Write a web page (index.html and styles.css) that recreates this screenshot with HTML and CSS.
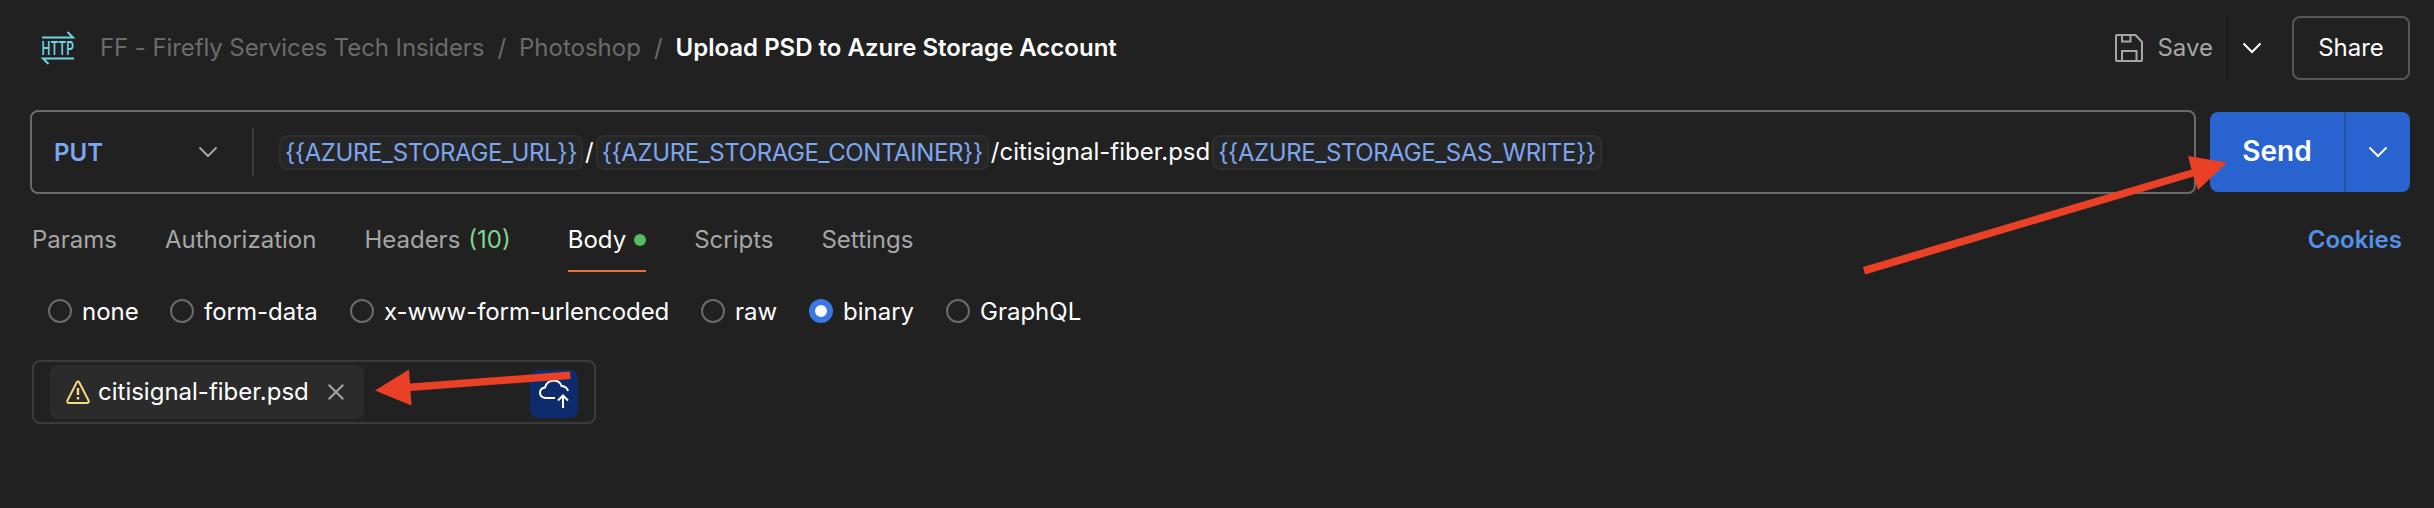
FILE: index.html
```html
<!DOCTYPE html>
<html lang="en">
<head>
<meta charset="utf-8">
<title>Upload PSD to Azure Storage Account</title>
<link rel="stylesheet" href="styles.css">
</head>
<body>
<header class="topbar">
  <svg class="http-icon" width="34" height="36" viewBox="0 0 34 36" role="img" aria-label="HTTP">
    <g fill="none" stroke="#6fd3e3" stroke-width="2">
      <path d="M1 7.500H32L26.500 2"/><path d="M33 28.500H2L7.500 34"/>
    </g>
    <text x="0.5" y="24.700" textLength="32.500" lengthAdjust="spacingAndGlyphs">HTTP</text>
  </svg>
  <nav class="crumbs">
    <span class="crumb collection">FF - Firefly Services Tech Insiders</span>
    <span class="sep">/</span>
    <span class="crumb">Photoshop</span>
    <span class="sep">/</span>
    <span class="title">Upload PSD to Azure Storage Account</span>
  </nav>
  <div class="actions">
    <button class="save">
      <svg width="28" height="28" viewBox="0 0 28 28" fill="none" stroke="#a6a6a6" stroke-width="2"><path d="M2 1H20.500L27 8V26Q27 27 26 27H2Q1 27 1 26V2Q1 1 2 1Z"/><path d="M7 1V7.500H15.500V1M7 27V17H21.500V27"/></svg>
      <span>Save</span>
    </button>
    <button class="save-more"><svg width="20" height="12" viewBox="0 0 20 12" fill="none" stroke="#fff" stroke-width="2"><path d="M1.500 1.500L10 10L18.500 1.500"/></svg></button>
    <button class="share">Share</button>
  </div>
</header>

<section class="request">
  <div class="url-box">
    <div class="method"><span class="verb">PUT</span><svg width="20" height="12" viewBox="0 0 20 12" fill="none" stroke="#a6a6a6" stroke-width="2"><path d="M1.500 1.500L10 10L18.500 1.500"/></svg></div>
    <div class="url"><span class="var">{{AZURE_STORAGE_URL}}</span><span>/</span><span class="var">{{AZURE_STORAGE_CONTAINER}}</span><span>/citisignal-fiber.psd</span><span class="var">{{AZURE_STORAGE_SAS_WRITE}}</span></div>
  </div>
  <div class="send">
    <button class="send-main">Send</button>
    <button class="send-more"><svg width="20" height="12" viewBox="0 0 20 12" fill="none" stroke="#fff" stroke-width="2"><path d="M1.500 1.500L10 10L18.500 1.500"/></svg></button>
  </div>
</section>

<nav class="tabs">
  <a class="tab">Params</a>
  <a class="tab">Authorization</a>
  <a class="tab">Headers <span class="count">(10)</span></a>
  <a class="tab active">Body<i class="dot"></i></a>
  <a class="tab">Scripts</a>
  <a class="tab">Settings</a>
  <a class="cookies">Cookies</a>
</nav>

<div class="modes">
  <label class="mode"><i class="radio"></i><span>none</span></label>
  <label class="mode"><i class="radio"></i><span>form-data</span></label>
  <label class="mode"><i class="radio"></i><span class="long">x-www-form-urlencoded</span></label>
  <label class="mode"><i class="radio"></i><span>raw</span></label>
  <label class="mode"><i class="radio on"></i><span>binary</span></label>
  <label class="mode"><i class="radio"></i><span>GraphQL</span></label>
</div>

<div class="file-box">
  <div class="file">
    <svg width="24" height="24" viewBox="0 0 24 24" fill="none" stroke="#f5dc7a" stroke-width="2"><path d="M10.800 2.200Q12 .6 13.200 2.200L22.600 20.500Q23.200 22.800 21.300 23H2.700Q.8 22.800 1.400 20.500Z"/><path d="M12 8V15M12 17V19.500" stroke-width="2.400"/></svg>
    <span class="name">citisignal-fiber.psd</span>
    <svg class="close" width="16" height="16" viewBox="0 0 16 16" stroke="#a6a6a6" stroke-width="2"><path d="M.7 .7L15.300 15.300M15.300 .7L.7 15.300"/></svg>
  </div>
  <button class="upload"><svg width="30" height="30" viewBox="0 0 30 30" fill="none" stroke="#fff" stroke-width="2"><path d="M16 19H6.500Q1 18.500 1 13.500Q1.500 9 6 8.500Q8 1.500 15 1.500Q21 2 22.500 7Q28 7.500 29 12"/><path d="M24 29V17M19 21.500L24 16.500L29 21.500"/></svg></button>
</div>

<svg class="arrows" width="2434" height="508" viewBox="0 0 2434 508" fill="#ea4025">
  <path d="M1863 267L2191.500 169.500L2188 156L2227 162.500L2198 190L2193.500 176.500L1865 274.500Z"/>
  <path d="M375 390.500L409 369.500L410 383.500L570 371.500L570.500 379L410.500 391L411.500 405.500Z"/>
</svg>
</body>
</html>
```
FILE: styles.css
```css
* { box-sizing: border-box; }
body {
  margin: 0;
  height: 508px;
  overflow: hidden;
  position: relative;
  background: #212121;
  color: #fff;
  font: 24px/32px Inter, "Liberation Sans", sans-serif;
  white-space: nowrap;
}
button { margin: 0; padding: 0; border: 0; background: none; color: inherit; font: inherit; display: flex; align-items: center; justify-content: center; }
svg { flex: none; display: block; }

.topbar { display: flex; align-items: center; height: 96px; padding: 0 24px 0 41px; }
.http-icon { overflow: visible; }
.http-icon text { font: 600 18px Inter, sans-serif; fill: #6fd3e3; }
.crumbs { display: flex; gap: 13px; margin-left: 25px; color: #6b6b6b; }
.collection { letter-spacing: -0.09px; }
.title { color: #fff; font-weight: 600; }
.actions { display: flex; align-items: center; height: 64px; margin-left: auto; }
.save { gap: 14px; padding-right: 13px; color: #a6a6a6; }
.save-more { width: 50px; height: 64px; border-left: 2px solid #1a1a1a; }
.share { width: 118px; height: 64px; margin-left: 16px; border: 2px solid #565656; border-radius: 8px; }

.request { display: flex; align-items: center; height: 84px; margin-top: 14px; padding: 0 24px 0 30px; }
.url-box { display: flex; align-items: center; width: 2166px; height: 84px; border: 2px solid #6b6b6b; border-radius: 8px; }
.method { display: flex; align-items: center; justify-content: space-between; width: 222px; height: 48px; padding: 0 34px 0 22px; border-right: 2px solid #3b3b3b; color: #7ca6f0; font-weight: 600; }
.verb { padding-top: 2px; }
.url { display: flex; align-items: center; margin-left: 25px; gap: 2px; }
.var { height: 35px; line-height: 31px; padding: 0 4px; border: 2px solid #2e2e2e; border-radius: 8px; background: #262626; color: #7ca6f0; letter-spacing: -0.39px; }
.send { display: flex; width: 200px; height: 80px; margin-left: auto; border-radius: 8px; background: #2963cf; }
.send-main { width: 134px; padding-bottom: 2px; font-size: 28px; font-weight: 600; }
.send-more { width: 66px; border-left: 2px solid #2452a3; }

.tabs { display: flex; height: 64px; margin-top: 14px; padding: 0 32px; gap: 48px; color: #a6a6a6; line-height: 64px; }
.tab { display: flex; align-items: center; }
.count { margin-left: 8px; color: #7fd495; }
.active { height: 64px; margin-left: 9px; border-bottom: 2px solid #ef6f3c; color: #fff; padding-top: 2px; }
.dot { width: 12px; height: 12px; margin-left: 8px; border-radius: 50%; background: #57b960; }
.cookies { margin-left: auto; color: #5590e8; font-weight: 600; }

.modes { display: grid; grid-template-columns: 122px 180px 351px 108px 137px auto; align-items: center; justify-content: start; height: 32px; margin-top: 23px; padding-left: 48px; }
.mode { display: flex; align-items: center; height: 32px; gap: 10px; }
.mode span { padding-top: 2px; }
.long { letter-spacing: -0.07px; }
.radio { width: 24px; height: 24px; border: 2px solid #6b6b6b; border-radius: 50%; }
.on { border: 6px solid #3879e4; background: #fff; }

.file-box { display: flex; align-items: center; justify-content: space-between; width: 564px; height: 64px; margin: 33px 0 0 32px; padding: 0 16px; border: 2px solid #3b3b3b; border-radius: 8px; }
.file { display: flex; align-items: center; width: 314px; height: 54px; padding: 0 20px 0 16px; border-radius: 8px; background: #2b2b2b; }
.name { margin-left: 8px; }
.close { margin-left: auto; }
.upload { width: 48px; height: 48px; margin-top: 4px; border-radius: 8px; background: #0e2b6b; }

.arrows { position: absolute; left: 0; top: 0; pointer-events: none; }
```
